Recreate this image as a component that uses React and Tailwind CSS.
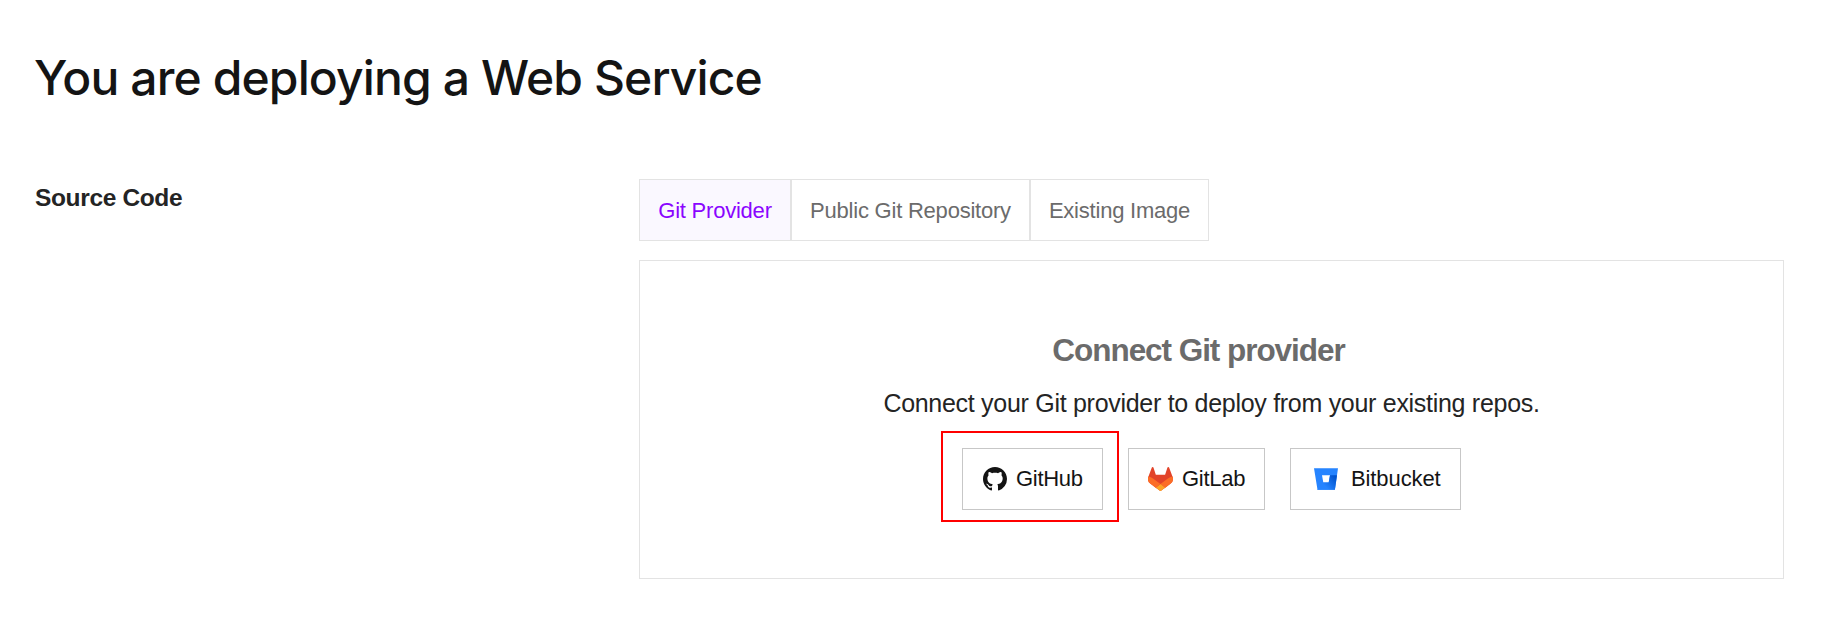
const tabs = ["Git Provider", "Public Git Repository", "Existing Image"];
const tabStyles = [
  "w-[152px] border-[#e3e3e3] bg-[#faf8ff] text-[#8a05ff]",
  "w-[239px] border-[#e3e3e3] text-[#6b6b6b]",
  "w-[179px] border-[#e3e3e3] text-[#6b6b6b]",
];

function GitHubIcon() {
  return (
    <svg className="h-6 w-6 shrink-0" viewBox="0 0 16 16" fill="#141414">
      <path fillRule="evenodd" d="M8 0C3.58 0 0 3.58 0 8c0 3.54 2.29 6.53 5.47 7.59.4.07.55-.17.55-.38 0-.19-.01-.82-.01-1.49-2.01.37-2.53-.49-2.69-.94-.09-.23-.48-.94-.82-1.13-.28-.15-.68-.52-.01-.53.63-.01 1.08.58 1.23.82.72 1.21 1.87.87 2.33.66.07-.52.28-.87.51-1.07-1.78-.2-3.64-.89-3.64-3.95 0-.87.31-1.59.82-2.15-.08-.2-.36-1.02.08-2.12 0 0 .67-.21 2.2.82.64-.18 1.32-.27 2-.27s1.36.09 2 .27c1.53-1.04 2.2-.82 2.2-.82.44 1.1.16 1.92.08 2.12.51.56.82 1.27.82 2.15 0 3.07-1.87 3.75-3.65 3.95.29.25.54.73.54 1.48 0 1.07-.01 1.93-.01 2.2 0 .21.15.46.55.38A8.01 8.01 0 0 0 16 8c0-4.42-3.58-8-8-8Z" />
    </svg>
  );
}

function GitLabIcon() {
  return (
    <svg className="h-6 w-[25px] shrink-0" viewBox="0 0 25 24">
      <path fill="#E24329" d="M24.507 9.5l-.034-.09L21.082.562a.896.896 0 00-1.694.091l-2.29 7.01H7.825L5.535.653a.898.898 0 00-1.694-.09L.451 9.411.416 9.5a6.297 6.297 0 002.09 7.278l.012.01.03.022 5.16 3.867 2.56 1.935 1.554 1.176a1.051 1.051 0 001.268 0l1.555-1.176 2.56-1.935 5.197-3.89.014-.01A6.297 6.297 0 0024.507 9.5z" />
      <path fill="#FC6D26" d="M24.507 9.5l-.034-.09a11.44 11.44 0 00-4.56 2.051l-7.447 5.632 4.742 3.584 5.197-3.89.014-.01A6.297 6.297 0 0024.507 9.5z" />
      <path fill="#FCA326" d="M7.707 20.677l2.56 1.935 1.555 1.176a1.051 1.051 0 001.268 0l1.555-1.176 2.56-1.935-4.743-3.584-4.755 3.584z" />
      <path fill="#FC6D26" d="M5.01 11.461a11.43 11.43 0 00-4.56-2.05L.416 9.5a6.297 6.297 0 002.09 7.278l.012.01.03.022 5.16 3.867 4.745-3.584-7.444-5.632z" />
    </svg>
  );
}

function BitbucketIcon() {
  return (
    <svg className="h-6 w-6 shrink-0" viewBox="0 0 24 24">
      <defs>
        <linearGradient id="bucket" x1="23" y1="8" x2="11" y2="19" gradientUnits="userSpaceOnUse">
          <stop offset="0.15" stopColor="#0052CC" />
          <stop offset="1" stopColor="#2684FF" />
        </linearGradient>
      </defs>
      <path fill="#2684FF" d="M0 1.2h24L20.9 22.7H3.5ZM8 8.3l1.3 7.2h5.4l1.3-7.2Z" fillRule="evenodd" />
      <path fill="url(#bucket)" d="M23 8.3H16l-1.3 7.2H9.3l-6 6.9.2.3h17.4Z" />
    </svg>
  );
}

const providerButton =
  "flex h-[62px] items-center border border-[#c7c7c7] text-[22px] leading-[30px] whitespace-nowrap text-[#141414]";

export default function App() {
  return (
    <main className="h-[620px] w-full overflow-hidden bg-white font-['Liberation_Sans',sans-serif]">
      <h1 className="pt-[46px] pl-[34px] font-['Inter',sans-serif] text-[48px] leading-[64px] font-[450] tracking-[-0.88px] text-[#141414]">
        You are deploying a Web Service
      </h1>
      <div className="mt-[69px] flex pr-[39px] pl-[35px]">
        <h2 className="w-[604px] shrink-0 pt-[3px] text-[24.5px] leading-[32px] font-bold tracking-[-0.35px] text-[#242424]">
          Source Code
        </h2>
        <div className="flex-1">
          <div className="flex">
            {tabs.map((tab, i) => (
              <button key={tab} className={`flex h-[62px] items-center justify-center border pt-px text-[22px] leading-[30px] tracking-[-0.22px] whitespace-nowrap ${tabStyles[i]}`}>
                {tab}
              </button>
            ))}
          </div>
          <section className="mt-[19px] flex h-[319px] flex-col items-center border border-[#e3e3e3] pt-[68px]">
            <h3 className="mr-[26px] text-[31.5px] leading-[42px] font-bold tracking-[-1.05px] whitespace-nowrap text-[#6b6b6b]">Connect Git provider</h3>
            <p className="mt-[15px] text-[25px] leading-[34px] tracking-[-0.29px] whitespace-nowrap text-[#242424]">Connect your Git provider to deploy from your existing repos.</p>
            <div className="mt-[11px] flex w-full pl-[301px]">
              <div className="h-[91px] w-[178px] shrink-0 border-2 border-[#ff0000] pt-[15px] pl-[19px]">
                <button className={`${providerButton} w-[141px] gap-[9px] pl-5 tracking-[-0.3px]`}><GitHubIcon />GitHub</button>
              </div>
              <button className={`${providerButton} mt-[17px] ml-[9px] w-[137px] gap-[9px] pl-[19px] tracking-[-0.25px]`}><GitLabIcon />GitLab</button>
              <button className={`${providerButton} mt-[17px] ml-[25px] w-[171px] gap-[13px] pl-[23px] tracking-[-0.1px]`}><BitbucketIcon />Bitbucket</button>
            </div>
          </section>
        </div>
      </div>
    </main>
  );
}
